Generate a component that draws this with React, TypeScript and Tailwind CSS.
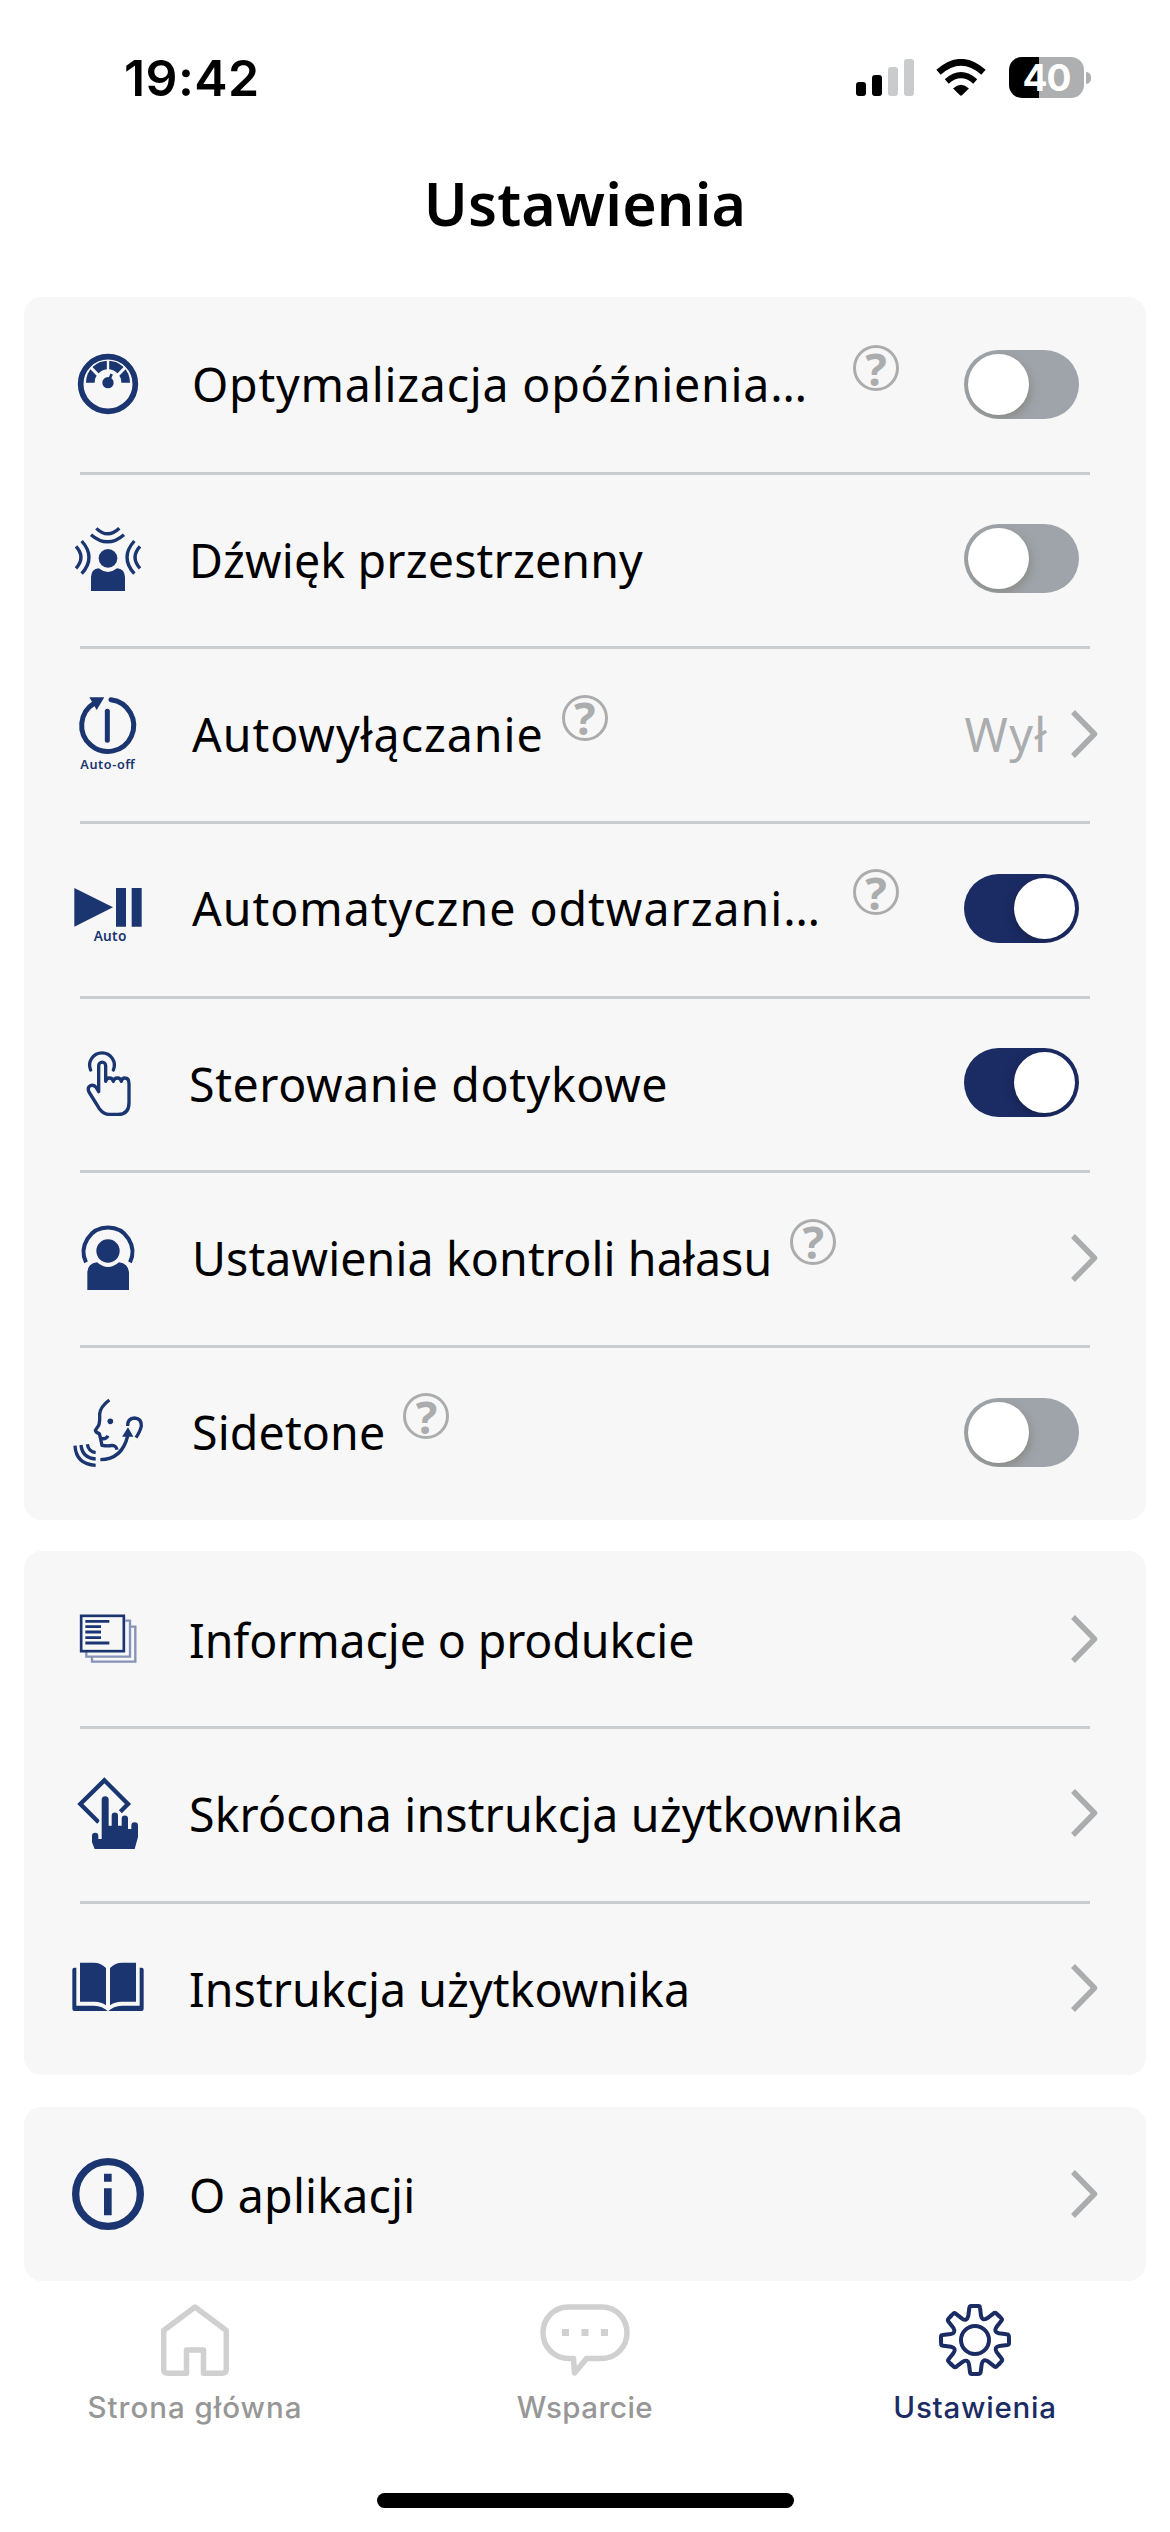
import * as React from 'react';
import { useState } from 'react';
import clsx from 'clsx';

const GaugeIcon: React.FC = () => (
  <svg viewBox="0 0 216 216" className="w-[72px] h-[72px]" fill="none" stroke="#1b3570">
    <circle cx="108" cy="108" r="82" strokeWidth="17" />
    <path d="M55 104A53 53 0 0 1 161 104" strokeWidth="26" />
    <g stroke="#f7f7f7">
      <path d="M108 36V72" strokeWidth="7" />
      <path d="M56 58L84 87M160 58L132 87" strokeWidth="9" />
    </g>
    <path d="M108 104L119 78" strokeWidth="8" />
    <circle cx="108" cy="104" r="17" fill="#1b3570" stroke="none" />
  </svg>
);

const SpatialIcon: React.FC = () => (
  <svg viewBox="0 0 216 216" className="w-[72px] h-[72px]" fill="none" stroke="#1b3570" strokeWidth="10">
    <circle cx="108" cy="106" r="28" fill="#1b3570" stroke="none" />
    <path d="M57 204V162Q58 138 80 136Q108 158 135 136Q158 138 159 162V204z" fill="#1b3570" stroke="none" />
    <path d="M57 35Q107 78 156 35M73 16Q107 49 142 16" />
    <path d="M29 54Q73 103 29 152M12 70Q42 103 12 136" />
    <path d="M187 54Q143 103 187 152M204 70Q174 103 204 136" />
  </svg>
);

const AutoOffIcon: React.FC = () => (
  <svg viewBox="0 0 216 216" className="w-[72px] h-[72px] overflow-visible" fill="none" stroke="#1b3570" strokeLinecap="round">
    <path d="M117 5A78 78 0 1 1 66 16" strokeWidth="15" />
    <path d="M52 -2H97L74 36z" fill="#1b3570" stroke="none" />
    <path d="M106 40V127" strokeWidth="15" />
    <text x="25" y="212" textLength="163" fontSize="38" fontWeight="600" fill="#1b3570" stroke="none" className="font-['Noto_Sans',sans-serif]">
      Auto-off
    </text>
  </svg>
);

const AutoPlayIcon: React.FC = () => (
  <svg viewBox="0 0 216 216" className="w-[72px] h-[72px] overflow-visible" fill="#1b3570">
    <path d="M7 48L123 106L7 164z" />
    <path d="M132 48h30v116h-30zM179 48h30v116h-30z" />
    <text x="65" y="207" textLength="98" fontSize="41" fontWeight="600" className="font-['Noto_Sans',sans-serif]">
      Auto
    </text>
  </svg>
);

const TouchIcon: React.FC = () => (
  <svg viewBox="0 0 216 216" className="w-[72px] h-[72px]" fill="none" stroke="#1b3570" strokeWidth="10" strokeLinecap="round" strokeLinejoin="round">
    <path d="M56 69A37 37 0 1 1 124 69" />
    <path d="M80 134V56a10.5 10.5 0 0 1 21 0V103Q103 93 112 93Q122 93 124 103Q126 93 136 93Q146 93 148 103Q150 93 158 93Q171 93 171 110V167Q171 202 138 202H112Q95 202 82 185L51 135Q45 121 55 116Q66 112 73 122z" />
  </svg>
);

const NoiseControlIcon: React.FC = () => (
  <svg viewBox="0 0 216 216" className="w-[72px] h-[72px]" fill="#1b3570">
    <circle cx="108" cy="87" r="35" />
    <path d="M42 121A73 73 0 1 1 174 121" fill="none" stroke="#1b3570" strokeWidth="12" />
    <path d="M46 204V152Q47 124 75 121Q108 149 141 121Q169 124 171 152V204z" />
  </svg>
);

const SidetoneIcon: React.FC = () => (
  <svg viewBox="0 0 216 216" className="w-[72px] h-[72px]" fill="none" stroke="#1b3570" strokeWidth="10" strokeLinejoin="round">
    <path d="M112 12Q85 32 83 54Q84 78 80 88L70 103Q71 110 82 113L86 129L90 148Q108 151 120 148Q133 149 135 161" />
    <path d="M85 127Q101 132 108 119" />
    <circle cx="115" cy="76" r="8.5" fill="#1b3570" stroke="none" />
    <path d="M167 90Q166 67 188 66Q209 68 208 90Q205 105 192 125" />
    <path d="M85 191Q150 190 167 120" />
    <path d="M168 94L150 122H184z" fill="#1b3570" stroke="none" />
    <path d="M9 149Q12 205 71 208M27 147Q31 186 71 189M46 145Q50 168 71 170" />
  </svg>
);

const ProductInfoIcon: React.FC = () => (
  <svg viewBox="0 0 216 216" className="w-[72px] h-[72px]" fill="none" stroke="#1b3570">
    <path d="M160 53H174V161H43V147M174 71H190V176H60V162" stroke="#8593b5" strokeWidth="7" />
    <rect x="27.5" y="38.5" width="128" height="106" strokeWidth="8" />
    <path d="M40 55H112M40 71H87M40 87H87M40 104H87M40 120H112" strokeWidth="8.5" />
  </svg>
);

const QuickGuideIcon: React.FC = () => (
  <svg viewBox="0 0 216 216" className="w-[72px] h-[72px]" fill="#1b3570">
    <path d="M145 104L168 81L97 10L25 81L80 136" fill="none" stroke="#1b3570" strokeWidth="13" />
    <path d="M82 190V68a17 17 0 0 1 30 0V146" fill="#f7f7f7" />
    <path d="M89 186V68a10.5 10.5 0 0 1 21 0V146H119V116a9.5 9.5 0 0 1 19 0V146H149V125a9.5 9.5 0 0 1 19 0V156H178V146a10 10 0 0 1 20 0V180L188 216H68L60 196V177a9.5 9.5 0 0 1 19 0V186z" />
  </svg>
);

const ManualIcon: React.FC = () => (
  <svg viewBox="0 0 216 216" className="w-[72px] h-[72px]" fill="#1b3570">
    <path d="M24 32H66Q86 32 102 48V160Q88 149 68 149H24z" />
    <path d="M192 32H150Q130 32 114 48V160Q128 149 148 149H192z" />
    <path d="M7 47H13V161H66Q92 162 107 177H7Q1 177 1 170V53Q1 47 7 47z" />
    <path d="M209 47H203V161H150Q124 162 109 177H209Q215 177 215 170V53Q215 47 209 47z" />
  </svg>
);

const InfoIcon: React.FC = () => (
  <svg viewBox="0 0 216 216" className="w-[72px] h-[72px]" fill="#1b3570">
    <circle cx="108" cy="108" r="97" fill="none" stroke="#1b3570" strokeWidth="22" />
    <path d="M96 47h23v24h-23zM96 91h23v81h-23z" />
  </svg>
);

const HomeIcon: React.FC = () => (
  <svg viewBox="0 0 68 72" className="w-[68px] h-[72px]" fill="none" stroke="currentColor" strokeWidth="5.5" strokeLinejoin="round">
    <path d="M25.5 69.2H6.7q-4 0-4-4V26.5L34 3L65.3 26.5V65.2q0 4-4 4H42.5V46H25.5z" />
  </svg>
);

const ChatIcon: React.FC = () => (
  <svg viewBox="0 0 90 72" className="w-[90px] h-[72px]" fill="none" stroke="currentColor" strokeWidth="5.5" strokeLinejoin="round">
    <path d="M28 3H62A25 25.7 0 0 1 62 54.4H46.5L34.5 69L33.5 54.4H28A25 25.7 0 0 1 28 3z" />
    <path d="M22 25h7v7h-7zM41.5 25h7v7h-7zM61 25h7v7h-7z" fill="currentColor" stroke="none" />
  </svg>
);

const GearIcon: React.FC = () => (
  <svg viewBox="0 0 216 216" className="w-[72px] h-[72px]" fill="none" stroke="currentColor" strokeWidth="12" strokeLinecap="round">
    {[0, 45, 90, 135, 180, 225, 270, 315].map((angle) => (
      <path
        key={angle}
        transform={`rotate(${angle} 108 108)`}
        d="M108 6H118Q122.500 6 123 11L126 35Q129 52 144.500 43L163 28.800Q168 24.500 172.400 28.500L180 36"
      />
    ))}
    <circle cx="108" cy="108" r="42" />
  </svg>
);

const Chevron: React.FC = () => (
  <svg viewBox="0 0 28 50" className="w-7 h-[50px] shrink-0" fill="none" stroke="#abacae" strokeWidth="5.5" strokeLinejoin="round">
    <path d="M3 3L24.500 25L3 47" />
  </svg>
);

const HelpBadge: React.FC = () => (
  <button className="w-[46px] h-[46px] shrink-0 -mt-8 rounded-full border-[3px] border-[#abacae] flex items-center justify-center text-[45px] leading-none font-bold text-[#abacae]">
    ?
  </button>
);

const Toggle: React.FC<{ checked: boolean; onChange: () => void }> = ({ checked, onChange }) => (
  <button
    onClick={onChange}
    className={clsx(
      'w-[115px] h-[69px] shrink-0 rounded-full p-1 flex items-center overflow-hidden transition-colors',
      checked ? 'bg-[#1b2c64] justify-end' : 'bg-[#9fa4aa] justify-start',
    )}
  >
    <span
      className={clsx(
        'w-[61px] h-[61px] rounded-full bg-white',
        checked ? 'shadow-[-2px_3px_8px_rgba(20,25,60,0.5)]' : 'shadow-[2px_4px_9px_rgba(120,120,105,0.55)]',
      )}
    />
  </button>
);

interface SettingItem {
  id: string;
  label: string;
  tracking: string;
  icon: React.FC;
  help?: boolean;
  wide?: boolean;
  toggle?: boolean;
  value?: string;
}

const groups: SettingItem[][] = [
  [
    { id: 'latency', label: 'Optymalizacja opóźnienia…', tracking: 'tracking-[0.78px]', icon: GaugeIcon, help: true, wide: true, toggle: true },
    { id: 'spatial', label: 'Dźwięk przestrzenny', tracking: 'tracking-[0.16px]', icon: SpatialIcon, toggle: true },
    { id: 'autooff', label: 'Autowyłączanie', tracking: 'tracking-[0.98px]', icon: AutoOffIcon, help: true, value: 'Wył' },
    { id: 'autoplay', label: 'Automatyczne odtwarzani…', tracking: 'tracking-[0.98px]', icon: AutoPlayIcon, help: true, wide: true, toggle: true },
    { id: 'touch', label: 'Sterowanie dotykowe', tracking: 'tracking-[0.6px]', icon: TouchIcon, toggle: true },
    { id: 'noise', label: 'Ustawienia kontroli hałasu', tracking: 'tracking-[0.1px]', icon: NoiseControlIcon, help: true },
    { id: 'sidetone', label: 'Sidetone', tracking: 'tracking-[0.14px]', icon: SidetoneIcon, help: true, toggle: true },
  ],
  [
    { id: 'product', label: 'Informacje o produkcie', tracking: 'tracking-[-0.12px]', icon: ProductInfoIcon },
    { id: 'quick', label: 'Skrócona instrukcja użytkownika', tracking: 'tracking-[0.13px]', icon: QuickGuideIcon },
    { id: 'manual', label: 'Instrukcja użytkownika', tracking: 'tracking-[0.04px]', icon: ManualIcon },
  ],
  [{ id: 'about', label: 'O aplikacji', tracking: 'tracking-[0.2px]', icon: InfoIcon }],
];

const tabs = [
  { label: 'Strona główna', tracking: 'tracking-[1px]', icon: HomeIcon, active: false },
  { label: 'Wsparcie', tracking: 'tracking-[0.5px]', icon: ChatIcon, active: false },
  { label: 'Ustawienia', tracking: 'tracking-[0.75px]', icon: GearIcon, active: true },
];

const StatusBar: React.FC = () => (
  <div className="h-[155px] pl-[124px] pr-[79px] flex justify-between font-['Inter',sans-serif]">
    <span className="mt-[53px] text-[50px] leading-[50px] font-semibold tracking-[0.4px]">19:42</span>
    <div className="mt-[57px] h-[41px] flex items-start">
      <div className="mt-0.5 h-[37px] flex items-end gap-1.5">
        <span className="w-2.5 h-3.5 rounded-[3px] bg-black" />
        <span className="w-2.5 h-[21px] rounded-[3px] bg-black" />
        <span className="w-2.5 h-[29px] rounded-[3px] bg-[#c9cbcd]" />
        <span className="w-2.5 h-[37px] rounded-[3px] bg-[#c9cbcd]" />
      </div>
      <svg viewBox="0 0 150 112" className="ml-[22px] mt-0.5 w-[50px] h-[37px]" fill="none" stroke="#000">
        <path d="M7 40Q75 -20 143 40" strokeWidth="20" />
        <path d="M32 68Q75 30 118 68" strokeWidth="18" />
        <path d="M51 89Q75 67 99 89L78 110Q75 113 72 110z" fill="#000" stroke="none" />
      </svg>
      <div className="ml-[23px] w-[75px] h-[41px] rounded-[13px] bg-[linear-gradient(to_right,#000_30px,#aeafb1_30px)] flex items-center justify-center text-[37px] leading-[41px] font-bold tracking-[-1px] text-white">
        40
      </div>
      <span className="ml-[2px] mt-[15px] w-[5px] h-3 rounded-r-full bg-[#aeafb1]" />
    </div>
  </div>
);

const App: React.FC = () => {
  const [enabled, setEnabled] = useState<Record<string, boolean>>({ autoplay: true, touch: true });

  const toggleSetting = (id: string) => {
    setEnabled((prev) => ({ ...prev, [id]: !prev[id] }));
  };

  return (
    <div className="w-[1170px] h-[2532px] bg-white text-black flex flex-col overflow-hidden font-['Noto_Sans',sans-serif]">
      <StatusBar />

      <h1 className="h-[142px] pt-[6px] text-center text-[59px] leading-[84px] font-semibold tracking-[0.2px]">Ustawienia</h1>

      {/* Settings groups */}
      <div className="px-6 flex flex-col gap-[31.6px]">
        {groups.map((items, g) => (
          <section key={g} className="bg-[#f7f7f7] rounded-[18px]">
            {items.map((item, i) => (
              <div key={item.id} className="h-[174.67px]">
                {i > 0 && <div className="mx-14 h-[3px] -mb-[3px] bg-[#cacdd0]" />}
                <div className="h-full pl-12 pr-12 flex items-center">
                  <item.icon />
                  <div className={clsx('flex items-center', item.help ? 'ml-12' : 'ml-[45px] pt-[2px]', item.wide ? 'w-[707px] justify-between' : 'gap-[18px]')}>
                    <span className={clsx('text-[46.5px] leading-[64px] whitespace-nowrap', item.tracking)}>{item.label}</span>
                    {item.help && <HelpBadge />}
                  </div>
                  <div className="ml-auto flex items-center">
                    {item.value && <span className="mr-[22px] text-[46.5px] leading-[64px] tracking-[1.5px] text-[#abacae]">{item.value}</span>}
                    {item.toggle ? (
                      <div className="mr-[19px]">
                        <Toggle checked={!!enabled[item.id]} onChange={() => toggleSetting(item.id)} />
                      </div>
                    ) : (
                      <Chevron />
                    )}
                  </div>
                </div>
              </div>
            ))}
          </section>
        ))}
      </div>

      {/* Bottom navigation */}
      <nav className="mt-[23px] flex font-['Inter',sans-serif]">
        {tabs.map((tab) => (
          <button key={tab.label} className={clsx('flex-1 flex flex-col items-center', tab.active ? 'text-[#1b2c64]' : 'text-[#d0d0d0]')}>
            <tab.icon />
            <span className={clsx('mt-[13px] text-[29.5px] leading-9 font-[450]', tab.tracking, !tab.active && 'text-[#979797]')}>{tab.label}</span>
          </button>
        ))}
      </nav>

      <div className="mt-auto mb-6 mx-auto w-[417px] h-[15px] rounded-full bg-black" />
    </div>
  );
};

export default App;
